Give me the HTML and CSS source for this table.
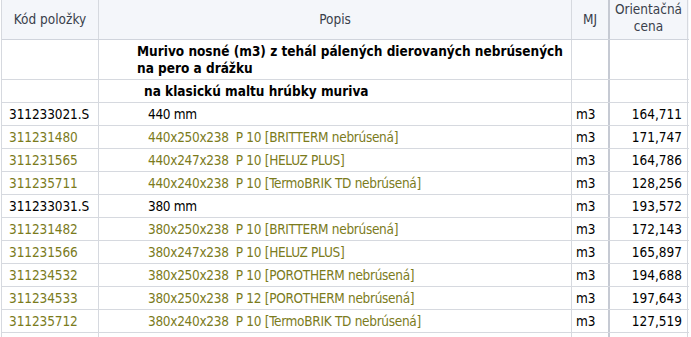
FILE: index.html
```html
<!DOCTYPE html>
<html lang="sk">
<head>
<meta charset="utf-8">
<title>Cenník murivo</title>
<link rel="stylesheet" href="styles.css">
</head>
<body>
<div class="grid">
  <div class="row head">
    <div class="c code">Kód položky</div>
    <div class="c desc">Popis</div>
    <div class="c mj">MJ</div>
    <div class="c price">Orientačná<br>cena</div>
  </div>
  <div class="row group">
    <div class="c code"></div>
    <div class="c desc">Murivo nosné (m3) z tehál pálených dierovaných nebrúsených<br>na pero a drážku</div>
    <div class="c mj"></div>
    <div class="c price"></div>
  </div>
  <div class="row sub">
    <div class="c code"></div>
    <div class="c desc">na klasickú maltu hrúbky muriva</div>
    <div class="c mj"></div>
    <div class="c price"></div>
  </div>
  <div class="row item">
    <div class="c code">311233021.S</div>
    <div class="c desc">440 mm</div>
    <div class="c mj">m3</div>
    <div class="c price">164,711</div>
  </div>
  <div class="row item var">
    <div class="c code">311231480</div>
    <div class="c desc">440x250x238&nbsp; P 10 [BRITTERM nebrúsená]</div>
    <div class="c mj">m3</div>
    <div class="c price">171,747</div>
  </div>
  <div class="row item var">
    <div class="c code">311231565</div>
    <div class="c desc">440x247x238&nbsp; P 10 [HELUZ PLUS]</div>
    <div class="c mj">m3</div>
    <div class="c price">164,786</div>
  </div>
  <div class="row item var">
    <div class="c code">311235711</div>
    <div class="c desc">440x240x238&nbsp; P 10 [TermoBRIK TD nebrúsená]</div>
    <div class="c mj">m3</div>
    <div class="c price">128,256</div>
  </div>
  <div class="row item">
    <div class="c code">311233031.S</div>
    <div class="c desc">380 mm</div>
    <div class="c mj">m3</div>
    <div class="c price">193,572</div>
  </div>
  <div class="row item var">
    <div class="c code">311231482</div>
    <div class="c desc">380x250x238&nbsp; P 10 [BRITTERM nebrúsená]</div>
    <div class="c mj">m3</div>
    <div class="c price">172,143</div>
  </div>
  <div class="row item var">
    <div class="c code">311231566</div>
    <div class="c desc">380x247x238&nbsp; P 10 [HELUZ PLUS]</div>
    <div class="c mj">m3</div>
    <div class="c price">165,897</div>
  </div>
  <div class="row item var">
    <div class="c code">311234532</div>
    <div class="c desc">380x250x238&nbsp; P 10 [POROTHERM nebrúsená]</div>
    <div class="c mj">m3</div>
    <div class="c price">194,688</div>
  </div>
  <div class="row item var">
    <div class="c code">311234533</div>
    <div class="c desc">380x250x238&nbsp; P 12 [POROTHERM nebrúsená]</div>
    <div class="c mj">m3</div>
    <div class="c price">197,643</div>
  </div>
  <div class="row item var">
    <div class="c code">311235712</div>
    <div class="c desc">380x240x238&nbsp; P 10 [TermoBRIK TD nebrúsená]</div>
    <div class="c mj">m3</div>
    <div class="c price">127,519</div>
  </div>
  <div class="row item tail">
    <div class="c code"></div>
    <div class="c desc"></div>
    <div class="c mj"></div>
    <div class="c price"></div>
  </div>
</div>
</body>
</html>
```

FILE: styles.css
```css
html, body {
  margin: 0;
  padding: 0;
  background: #ffffff;
}

body {
  font-family: "DejaVu Sans Condensed", "DejaVu Sans", Verdana, sans-serif;
  font-size: 13.5px;
  color: #000000;
  overflow: hidden;
}

.grid {
  margin-left: 1px;
  width: 687px;
  border-left: 1px solid #d6d9df;
}

.row {
  box-sizing: border-box;
  display: grid;
  grid-template-columns: 97px 473px 38px 78px;
  border-bottom: 1px solid #d6d9df;
}

.c {
  box-sizing: border-box;
  border-right: 1px solid #d6d9df;
  display: flex;
  align-items: center;
  white-space: nowrap;
}

.c.mj {
  border-right: 2px solid #c6cad3;
}

.head {
  height: 40px;
  background: #f4f6fa;
  color: #3a3f4b;
  border-bottom-color: #d0d4dc;
}

.head .c {
  justify-content: center;
  text-align: center;
  line-height: 17px;
}

.head .price {
  padding-bottom: 3px;
}

.group {
  height: 40px;
  font-weight: bold;
}

.group .desc {
  padding-left: 38px;
  line-height: 17px;
  padding-top: 1px;
}

.sub {
  height: 23px;
  font-weight: bold;
}

.sub .desc {
  padding-left: 45px;
}

.item {
  height: 23px;
}

.item .code {
  padding-left: 7px;
  letter-spacing: -0.1px;
}

.item .desc {
  padding-left: 49px;
  letter-spacing: -0.3px;
}

.item .mj {
  padding-left: 4px;
}

.item .price {
  justify-content: flex-end;
  padding-right: 5px;
}

.var .code,
.var .desc {
  color: #7b7b1c;
}

.tail {
  border-bottom: none;
}
```
